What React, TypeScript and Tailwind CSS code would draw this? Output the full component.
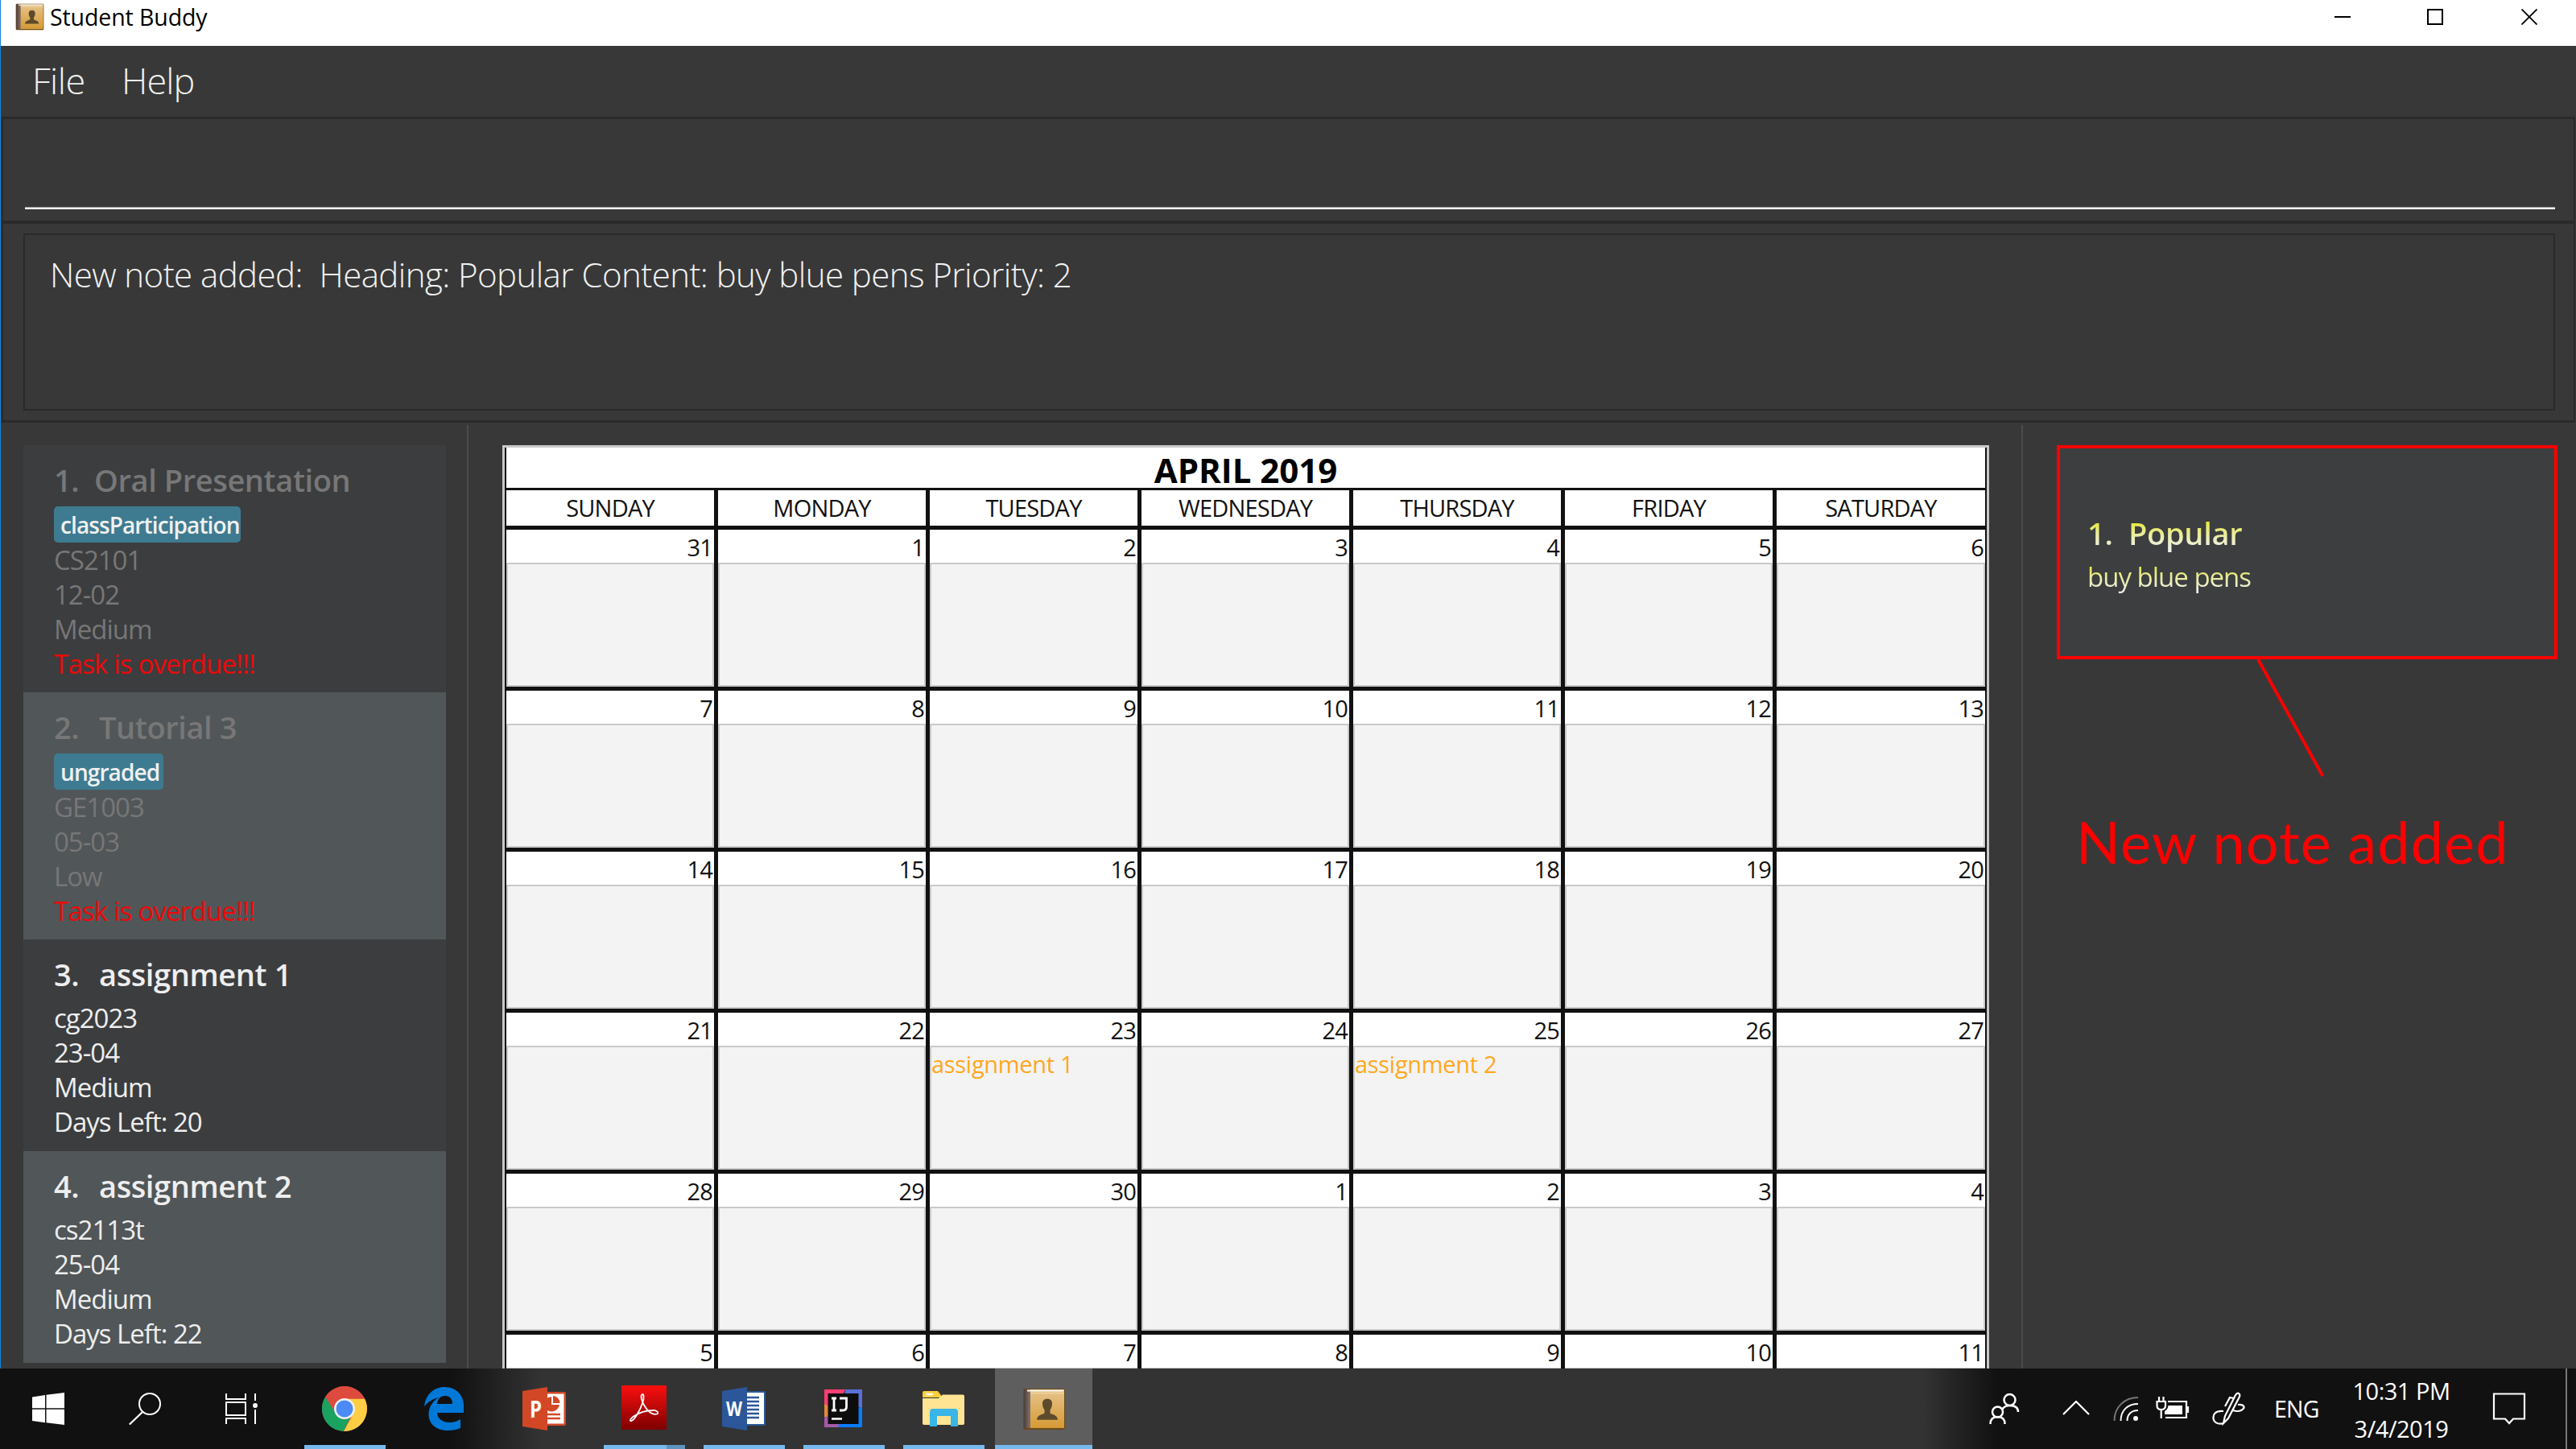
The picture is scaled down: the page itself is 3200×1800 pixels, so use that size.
import React from "react";

const tasks = [
  { n: "1.", title: "Oral Presentation", gap: "w-[50px]", tag: "classParticipation", tagW: "w-[232px] tracking-[-0.9px]", lines: ["CS2101", "12-02", "Medium"], overdue: true },
  { n: "2.", title: "Tutorial 3", gap: "w-[56px]", tag: "ungraded", tagW: "w-[136px] tracking-[-0.9px]", lines: ["GE1003", "05-03", "Low"], overdue: true },
  { n: "3.", title: "assignment 1", gap: "w-[56px]", lines: ["cg2023", "23-04", "Medium", "Days Left: 20"] },
  { n: "4.", title: "assignment 2", gap: "w-[56px]", lines: ["cs2113t", "25-04", "Medium", "Days Left: 22"] },
];

const days = ["SUNDAY", "MONDAY", "TUESDAY", "WEDNESDAY", "THURSDAY", "FRIDAY", "SATURDAY"];
const weeks = [
  [31, 1, 2, 3, 4, 5, 6],
  [7, 8, 9, 10, 11, 12, 13],
  [14, 15, 16, 17, 18, 19, 20],
  [21, 22, 23, 24, 25, 26, 27],
  [28, 29, 30, 1, 2, 3, 4],
  [5, 6, 7, 8, 9, 10, 11],
];
const events: Record<string, string> = { "3-2": "assignment 1", "3-4": "assignment 2" };

function BookIcon({ className }: { className: string }) {
  return (
    <svg className={className} viewBox="0 0 54 52" preserveAspectRatio="none">
      <defs>
        <linearGradient id="book" x1="0" y1="0" x2="0" y2="1">
          <stop offset="0" stopColor="#e6c48c" />
          <stop offset="1" stopColor="#d69a35" />
        </linearGradient>
        <linearGradient id="spine" x1="0" y1="0" x2="1" y2="0">
          <stop offset="0" stopColor="#4c3f3c" />
          <stop offset="1" stopColor="#85736c" />
        </linearGradient>
      </defs>
      <rect x="1" y="1" width="52" height="50" rx="2" fill="#6b4a1c" />
      <rect x="2" y="2" width="8" height="47" fill="url(#spine)" />
      <rect x="10" y="2" width="42" height="47" fill="url(#book)" />
      <rect x="6" y="2.500" width="45" height="2" fill="#f7f1e6" />
      <rect x="10" y="6" width="42" height="1" fill="#f3dcae" />
      <path d="M25 19c0-4 3-5.500 6-5.500s6 1.500 6 5.500c0 4-1 6-2.500 8v4c3 2 9 2 9.500 8H18c.5-6 6.500-6 9.500-8v-4c-1.500-2-2.500-4-2.500-8z" fill="#5d4a2c" />
    </svg>
  );
}

function TitleBar() {
  return (
    <header className="flex h-[57px] shrink-0 items-start bg-white text-black">
      <BookIcon className="ml-[18px] mt-1 h-[34px] w-9" />
      <span className="ml-[7px] text-[28.500px] leading-[43px] tracking-[-0.1px]">Student Buddy</span>
      <div className="ml-auto mr-[48px] flex items-center gap-[95px] pt-[11px]">
        <svg className="h-5 w-5" viewBox="0 0 20 20"><path d="M0 10h20" stroke="#000" strokeWidth="2" /></svg>
        <svg className="h-5 w-5" viewBox="0 0 20 20"><rect x="1" y="1" width="18" height="18" fill="none" stroke="#000" strokeWidth="2" /></svg>
        <svg className="ml-[2px] h-5 w-5" viewBox="0 0 20 20"><path d="M.5.5l19 19M19.500.5l-19 19" stroke="#000" strokeWidth="1.800" /></svg>
      </div>
    </header>
  );
}

function TaskList() {
  return (
    <aside className="w-[579px] shrink-0 pl-7 pt-7">
      <div className="w-[525px]">
        {tasks.map((t, i) => (
          <div
            key={t.n}
            className={
              (i % 2 ? "bg-[#515658] " : "bg-[#3c3d3f] ") +
              (t.overdue ? "h-[307px] text-[#777777] " : "h-[263px] text-[#eeeeee] ") +
              "pl-[38px] pt-[16px]"
            }
          >
            <div className={"flex text-[38px] font-semibold leading-[54px] tracking-[-0.4px] " + (t.tag ? "h-[56px]" : "h-[60px]")}>
              <span className={t.gap}>{t.n}</span>
              <span>{t.title}</span>
            </div>
            {t.tag ? (
              <div className={"mt-1 h-[45px] rounded-[5px] bg-[#3e7b91] pl-2 text-[28px] font-semibold leading-[46px] text-[#f0f0f0] " + t.tagW}>{t.tag}</div>
            ) : null}
            <div className="text-[33px] leading-[43px] tracking-[-1px]">
              {t.lines.map((l) => (
                <div key={l}>{l}</div>
              ))}
              {t.overdue ? <div className="tracking-[-0.8px] text-[#ee0808]">Task is overdue!!!</div> : null}
            </div>
          </div>
        ))}
      </div>
    </aside>
  );
}

function Calendar() {
  return (
    <main className="flex w-[1929px] shrink-0 overflow-hidden pl-[42px] pt-7">
      <div className="h-[1147px] w-[1847px] border-x-[3px] border-t-[3px] border-[#c8c8c8] bg-white text-[#111]">
        <div className="border-x-[2px] border-[#111]">
          <div className="h-[50px] text-center text-[42px] font-bold leading-[55px] text-black">APRIL 2019</div>
          <div className="grid h-[52px] grid-cols-[repeat(6,263px)_1fr] border-b-[5px] border-t-[3px] border-[#111]">
            {days.map((d, i) => (
              <div key={d} className={"text-center text-[29px] leading-[44px] tracking-[-0.8px] " + (i < 6 ? "border-r-[5px] border-[#111]" : "")}>{d}</div>
            ))}
          </div>
          {weeks.map((w, r) => (
            <div key={r} className={"grid grid-cols-[repeat(6,263px)_1fr] border-[#111] " + (r < 5 ? "h-[200px] border-b-[5px]" : "h-[42px] overflow-hidden")}>
              {w.map((n, c) => (
                <div key={c} className={"flex flex-col " + (c < 6 ? "border-r-[5px] border-[#111]" : "")}>
                  <div className="h-[41px] shrink-0 pr-[2px] text-right text-[29px] leading-[43px] tracking-[-0.8px]">{n}</div>
                  <div className="flex-1 border-[2px] border-[#c9c9c9] bg-[#f3f3f3] text-[29px] leading-[42px] tracking-[-0.3px] text-[#ffa81f]">
                    {events[r + "-" + c]}
                  </div>
                </div>
              ))}
            </div>
          ))}
        </div>
      </div>
    </main>
  );
}

function Notes() {
  return (
    <section className="flex-1 pl-[42px] pt-7">
      <div className="h-[266px] w-[622px] border-4 border-[#ff0000] bg-[#3c3e40] pl-[34px] pt-[78px]">
        <div className="flex h-[56px] w-fit bg-gradient-to-b from-[#e8e830] from-25% to-[#efefef] to-85% bg-clip-text text-[38px] font-semibold leading-[54px] tracking-[-0.3px] text-transparent">
          <span className="w-[51px]">1.</span>
          <span>Popular</span>
        </div>
        <div className="mt-[2px] w-fit bg-gradient-to-b from-[#e8e830] from-20% to-[#efefef] to-90% bg-clip-text text-[33px] leading-[48px] tracking-[-1px] text-transparent">buy blue pens</div>
      </div>
      <svg className="ml-[248px] h-[148px] w-[90px]" viewBox="0 0 90 148"><path d="M2 0L82.500 145" stroke="#ff0000" strokeWidth="4" /></svg>
      <div className="ml-[24px] mt-[28px] whitespace-nowrap font-['Lato'] text-[72px] leading-[100px] tracking-[1.1px] text-[#ff0000]">New note added</div>
    </section>
  );
}

const apps = [
  { icon: "chrome", line: "bg-[#76b9ed]" },
  { icon: "edge", line: "" },
  { icon: "ppt", line: "" },
  { icon: "pdf", line: "bg-linear-to-r from-[#76b9ed] from-[77%] to-[#5f93bd] to-[77%]" },
  { icon: "word", line: "bg-[#76b9ed]" },
  { icon: "ij", line: "bg-[#76b9ed]" },
  { icon: "files", line: "bg-[#76b9ed]" },
];

function AppIcon({ name }: { name: string }) {
  const p = { className: "h-[60px] w-[60px]", viewBox: "0 0 60 60" };
  switch (name) {
    case "chrome":
      return (
        <svg {...p}>
          <circle cx="29" cy="30" r="28" fill="#dd4b3e" />
          <path d="M29 30L5.200 15.200A28 28 0 0 0 28 58L38 36z" fill="#1aa260" />
          <path d="M29 17.500H54A28 28 0 0 1 28 58L41 34z" fill="#ffce44" />
          <path d="M5.200 15.200L17 34L29 17.500H54A28 28 0 0 0 5.200 15.200z" fill="#dd4b3e" />
          <circle cx="29" cy="30" r="13" fill="#f1f1f1" />
          <circle cx="29" cy="30" r="10.500" fill="#4c8bf5" />
        </svg>
      );
    case "edge":
      return (
        <svg {...p}>
          <path d="M4 27C6 12 16 3 29 3c16 0 24 11 24 24v8H20c.5 8 7 12 15 12 6 0 10-1.500 14-4v11c-4 2-9.500 3-16 3C18 57 9 48 9.500 36 10 27 15 20 22 16c-8 2-14 6-18 11zM20 24h19c0-6-3-10-9-10s-9.500 4-10 10z" fill="#0078d7" />
        </svg>
      );
    case "ppt":
      return (
        <svg {...p}>
          <rect x="29" y="9" width="27" height="42" rx="2" fill="#d24726" />
          <rect x="33" y="11.500" width="20.500" height="37" fill="#fff" />
          <path d="M38 15v10h10a10 10 0 0 1-15 7V16.500z" fill="#d24726" />
          <path d="M40 14a9 9 0 0 1 8.500 9H40z" fill="#d24726" />
          <path d="M33 37h16M33 42h16" stroke="#d24726" strokeWidth="2.500" />
          <path d="M2 8L33 3v54L2 52z" fill="#d24726" />
          <text x="11" y="40.500" fontFamily="Open Sans" fontWeight="700" fontSize="28" textLength="15" lengthAdjust="spacingAndGlyphs" fill="#fff">P</text>
        </svg>
      );
    case "pdf":
      return (
        <svg {...p}>
          <defs>
            <linearGradient id="pdf" x1="0" y1="0" x2="0" y2="1"><stop offset="0" stopColor="#fb0f0f" /><stop offset="1" stopColor="#7d0000" /></linearGradient>
          </defs>
          <rect x="1" y="1" width="56" height="55" fill="url(#pdf)" />
          <path d="M27 12c-3 1-1 9 3 15 4 7 10 11 15 9.500 3-1 0-5-5-4.500-9 0-18 3.500-24 7.500-5 4-5 6-2.500 5.500C18 43 24 32 27.500 22c1.500-5 1.500-10-.5-10z" fill="none" stroke="#fff" strokeWidth="1.800" />
        </svg>
      );
    case "word":
      return (
        <svg {...p}>
          <rect x="30" y="8" width="26" height="43" rx="1.500" fill="#2b579a" />
          <rect x="33" y="10" width="21" height="39" fill="#fff" />
          <path d="M33 16h15M33 21h15M33 26h15M33 31h15M33 36h15M33 41h15" stroke="#2b579a" strokeWidth="2.500" />
          <path d="M2 8L33 3v54L2 52z" fill="#2b579a" />
          <text x="7" y="38.500" fontFamily="Open Sans" fontWeight="700" fontSize="25" textLength="20" lengthAdjust="spacingAndGlyphs" fill="#fff">W</text>
        </svg>
      );
    case "ij":
      return (
        <svg {...p}>
          <path d="M5 6h26L20 30 5 26z" fill="#fe3d74" />
          <path d="M31 6h21v24L30 20z" fill="#5a6fd8" />
          <path d="M52 28v25H20l10-20z" fill="#087cfa" />
          <path d="M5 24v18l20-8z" fill="#e08a35" />
          <path d="M5 40v13h17l6-15z" fill="#a55aa8" />
          <rect x="9.500" y="11" width="38" height="38" fill="#0d0d0d" />
          <path d="M14 17h6M14 32h6M17 17v15M24 17h8.500v10.500q0 4.500-4.500 4.500h-4" fill="none" stroke="#fff" strokeWidth="2.800" />
          <path d="M14 42.500h13" stroke="#fff" strokeWidth="2.500" />
        </svg>
      );
    default:
      return (
        <svg {...p}>
          <path d="M3 10q0-2 2-2h17l6 8H3z" fill="#ffcf38" />
          <path d="M7 12h9" stroke="#fff" strokeWidth="2.500" />
          <path d="M3 17h20l5-4.500h25q2 0 2 2V48q0 2-2 2H5q-2 0-2-2z" fill="#ffe593" />
          <path d="M12 52V34q0-4 4-4h27q4 0 4 4v18h-9V39H21v13z" fill="#39b5e8" />
        </svg>
      );
  }
}

function Taskbar() {
  return (
    <footer className="flex h-[100px] shrink-0 bg-linear-to-r from-[#111111] from-[17.5%] via-[#333333] via-[21%] to-[#333333] to-[74%] text-white">
      <div className="flex w-[1357px] shrink-0">
        <div className="flex w-[378px] items-center">
          <svg className="ml-10 h-10 w-10" viewBox="0 0 40 40"><path d="M0 5.500L16 3v16.300H0zM17.500 2.700L40 0v19.300H17.500zM0 20.800h16v16.500L0 35zM17.500 20.800H40V40l-22.500-2.700z" fill="#fff" /></svg>
          <svg className="ml-[80px] h-10 w-10" viewBox="0 0 40 40"><circle cx="26" cy="14" r="13" fill="none" stroke="#fff" strokeWidth="2" /><path d="M17 24L.8 39.500" stroke="#fff" strokeWidth="2.200" /></svg>
          <svg className="ml-[80px] h-10 w-10" viewBox="0 0 40 40" fill="none" stroke="#fff" strokeWidth="2"><path d="M1 1v7h24V1M1 12h24v16H1zM1 39v-7h24v7M37 1v9M37 21v18" /><circle cx="37" cy="16" r="2" fill="#fff" /></svg>
        </div>
        {apps.map((a, i) => (
          <div key={a.icon} className={"flex w-[101px] shrink-0 flex-col items-center justify-between pt-5 " + (i ? "ml-[23px]" : "")}>
            <AppIcon name={a.icon} />
            <div className={"h-[5px] w-full " + a.line} />
          </div>
        ))}
        <div className="ml-[13px] flex w-[121px] shrink-0 flex-col items-center justify-between bg-[#5e5e5e] pt-[24px]">
          <BookIcon className="h-[53px] w-[54px]" />
          <div className="h-[5px] w-full bg-[#76b9ed]" />
        </div>
      </div>
      <div className="flex flex-1 items-center bg-linear-to-r from-[#333333] from-[56%] to-[#111111] to-[61%] pl-[1114px]">
        <svg className="h-10 w-[38px] shrink-0" viewBox="0 0 38 40" fill="none" stroke="#fff" strokeWidth="2.500">
          <circle cx="25.500" cy="9" r="7" /><path d="M16 21q3-5 9.500-5Q36 16 36 24" /><circle cx="10.500" cy="24" r="6.500" /><path d="M1.500 39q0-9 9-9t9 9" />
        </svg>
        <svg className="ml-[53px] h-5 w-[34px] shrink-0" viewBox="0 0 34 20"><path d="M1 17L17 1l16 16" fill="none" stroke="#fff" strokeWidth="2.200" /></svg>
        <svg className="ml-[29px] h-8 w-8 shrink-0" viewBox="0 0 32 32" fill="none" stroke="#fff" strokeWidth="2"><path d="M1.500 31C1.500 14 14 2 31 2" stroke="#777" /><path d="M9.500 31C9.500 18 18 10 31 10M17.500 31c0-8 5-13 13.500-13" /><circle cx="28" cy="28" r="3" fill="#fff" stroke="none" /></svg>
        <svg className="ml-[21px] h-[30px] w-[42px] shrink-0" viewBox="0 0 42 30"><path d="M15 6h23v20H12M40 12v8" fill="none" stroke="#fff" strokeWidth="2.200" /><path d="M15.500 11H33v11H11v-4q4-2 4.500-7z" fill="#fff" /><path d="M4 0v5M9.500 0v5M1.500 6H12v5q0 5-5.250 5T1.500 11zM6.700 16v11" fill="none" stroke="#fff" strokeWidth="2.200" /></svg>
        <svg className="ml-[28px] h-[42px] w-[42px] shrink-0" viewBox="0 0 42 42" fill="none" stroke="#fff" strokeWidth="2.200"><path d="M14 39L16 30 29 4q2-3 4-2t1 4L20 33zM27 8l-5-1-6 11M14 24C4 23 1 28 1.500 33s6 8 12 6M32 16c8-1 10 4 4 7-3 1.500-7 1-10 0" /></svg>
        <span className="ml-[35px] w-[60px] text-[28.500px] tracking-[-0.8px]">ENG</span>
        <div className="ml-[36px] flex w-[124px] shrink-0 flex-col items-center whitespace-nowrap pt-[2px] text-[29px] leading-[47px] tracking-[-0.5px]">
          <span>10:31 PM</span>
          <span>3/4/2019</span>
        </div>
        <svg className="ml-[51px] h-10 w-[42px] shrink-0" viewBox="0 0 42 40"><path d="M2 1.500h38v31H26l-5 5.500-5-5.500H2z" fill="none" stroke="#fff" strokeWidth="2.200" /></svg>
        <div className="ml-auto mr-[11px] h-full w-[2px] bg-[#777]" />
      </div>
    </footer>
  );
}

export default function App() {
  return (
    <div className="flex h-[1800px] w-[3200px] flex-col overflow-hidden bg-[#383838] font-['Open_Sans',sans-serif]">
      <div className="flex h-[1700px] shrink-0 flex-col overflow-hidden border-l border-[#1883d7]">
        <TitleBar />
        <nav className="flex h-[88px] shrink-0 gap-[50px] pl-[39px] text-[45px] font-light leading-[86px] text-[#f0f0f0]">
          <span className="w-[61px] tracking-[-0.5px]">File</span>
          <span className="tracking-[-0.9px]">Help</span>
        </nav>
        <div className="ml-px mr-px flex h-[131px] shrink-0 flex-col border-x-2 border-b-2 border-t-[3px] border-[#2a2a2a]">
          <div className="ml-[27px] mr-[23px] mt-[109px] h-[3px] border-t border-[#9a9a9a] bg-white" />
        </div>
        <div className="ml-px mr-px h-[249px] shrink-0 border-x-2 border-b-[3px] border-t-2 border-[#2a2a2a] pl-[25px] pr-[23px] pt-[12px]">
          <div className="h-[220px] border-[2px] border-[#2a2a2a] pl-[31px] text-[42px] font-light leading-[98px] text-[#f2f2f2]">
            <span className="inline-block whitespace-pre tracking-[-0.57px]">New note added:  Heading: Popular Content: buy blue pens Priority: 2</span>
          </div>
        </div>
        <div className="flex h-[1175px] shrink-0">
          <TaskList />
          <div className="mt-[3px] w-[2px] shrink-0 bg-[#4b4b4b]" />
          <Calendar />
          <div className="mt-[3px] w-[2px] shrink-0 bg-[#4b4b4b]" />
          <Notes />
        </div>
      </div>
      <Taskbar />
    </div>
  );
}
